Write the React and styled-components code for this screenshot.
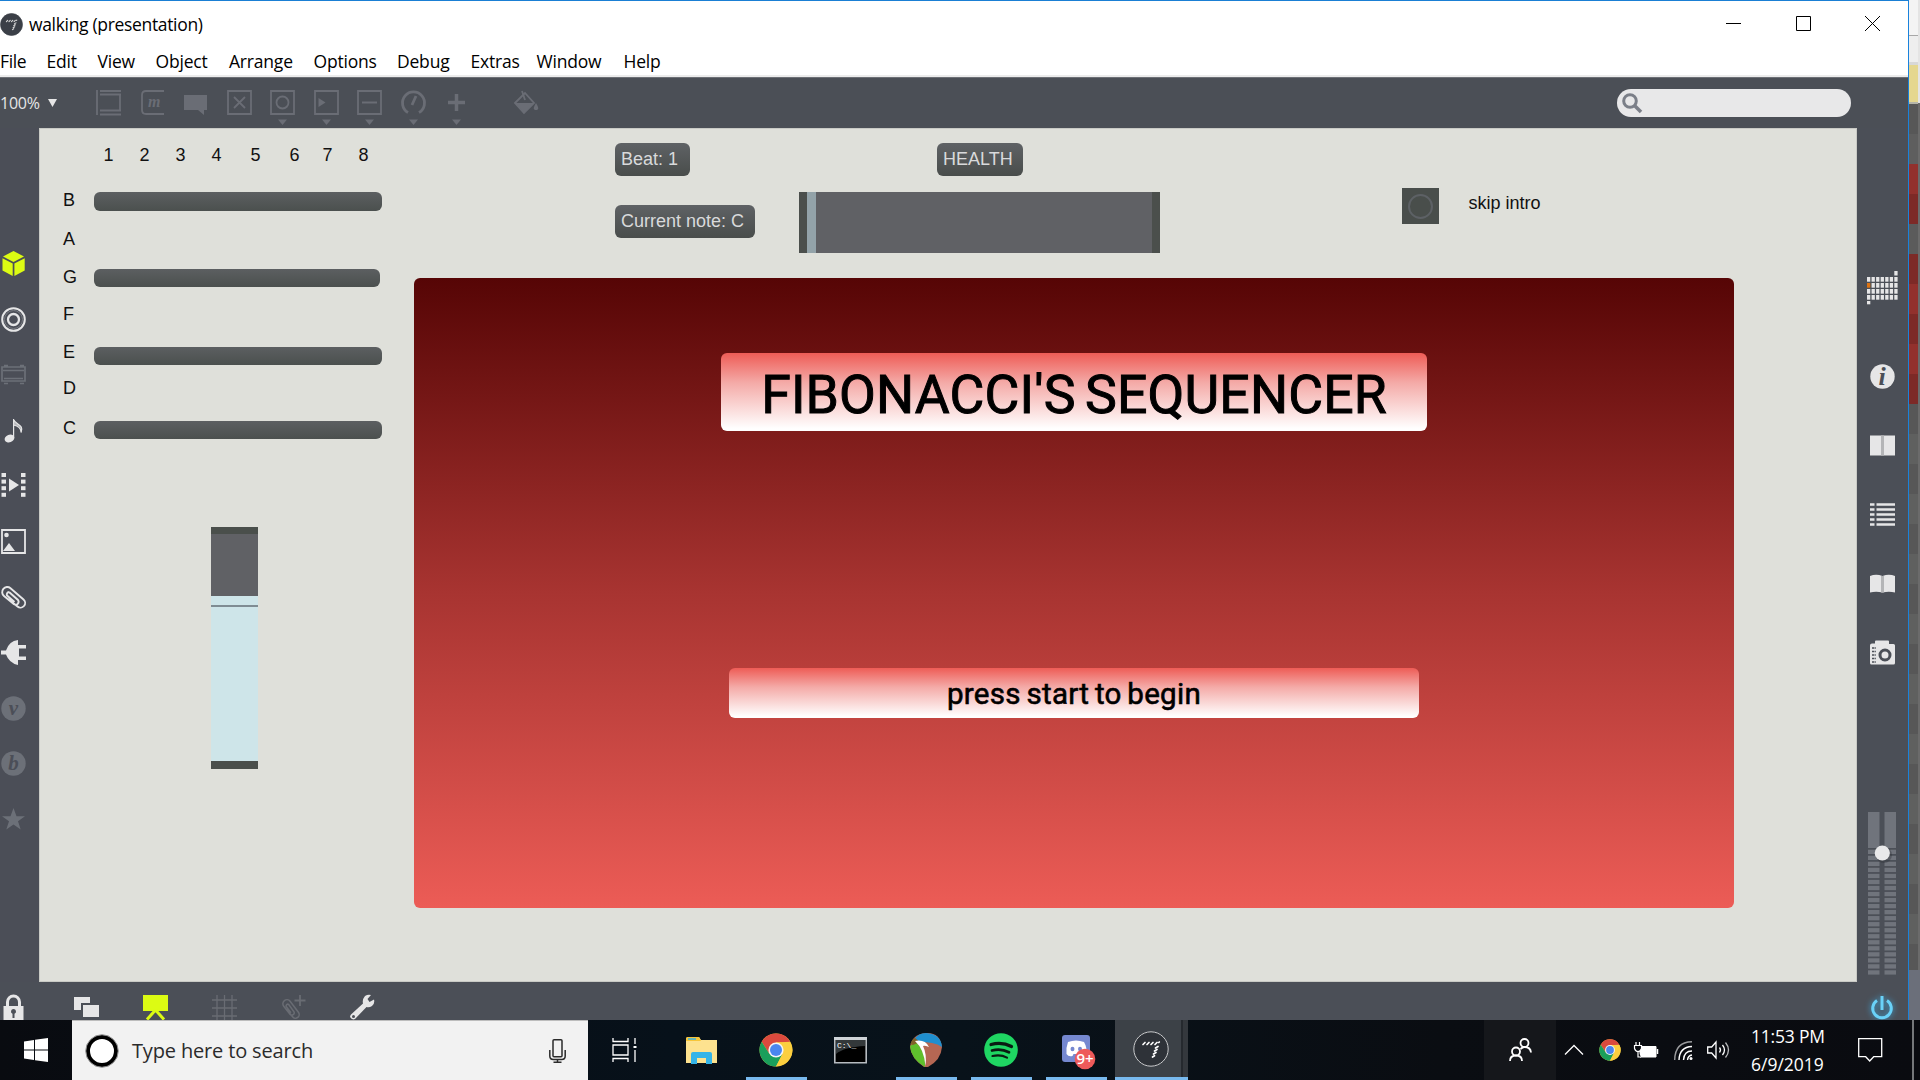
import React from "react";
import styled, { createGlobalStyle } from "styled-components";

const Global = createGlobalStyle`
  * { box-sizing: border-box; }
  body { margin: 0; background: #0a0e14; overflow: hidden; font-family: "Open Sans", "Noto Sans", sans-serif; }
  svg { display: block; flex: none; overflow: visible; }
`;

const Screen = styled.div`
  width: 1920px; height: 1080px; overflow: hidden;
  display: flex; flex-direction: column;
`;
const Desktop = styled.div`height: 1020px; display: flex; overflow: hidden; flex: none;`;
const Win = styled.div`
  width: 1909px; height: 1020px; display: flex; flex-direction: column;
  border-top: 1px solid #1a7fd4; border-right: 1px solid #1a82dc;
  background: #4b4f57; flex: none;
`;
const Label = styled.span`
  white-space: pre; display: block; flex: none;
  font-size: ${(p) => p.$size}px; line-height: ${(p) => p.$lh || 24}px;
  letter-spacing: ${(p) => p.$ls || 0}px;
  color: ${(p) => p.$color || "#000"};
`;
const TitleBar = styled.header`
  height: 46px; display: flex; align-items: center; background: #fff;
`;
const TitleText = styled(Label)`padding-left: 6px; width: 1703px; margin-bottom: 1px;`;
const WinControls = styled.div`
  display: flex; width: 154px; justify-content: space-between; padding-bottom: 1px; flex: none;
`;
const MenuBar = styled.nav`
  height: 30px; background: #fff; display: flex; align-items: center; border-bottom: 2px solid #ececec;
`;
const MenuItem = styled(Label)`width: ${(p) => p.$w}px;`;
const Toolbar = styled.div`
  height: 51px; display: flex; align-items: flex-start; border-top: 1px solid #6d7076;
  background: #4b4f56; color: #72757d;
`;
const Zoom = styled.div`
  width: 87px; height: 50px; display: flex; align-items: center; gap: 8px;
`;
const ToolCell = styled.div`
  width: ${(p) => p.$w || 43.5}px; padding-top: 12px; display: flex; justify-content: center; flex: none;
`;
const SearchField = styled.div`
  margin: 11px 0 0 1043px; width: 234px; height: 28px; border-radius: 14px; background: #e8e8e9;
  display: flex; align-items: center; padding-left: 5px; color: #7b7f88;
`;
const Body = styled.div`height: 854px; display: flex;`;
const Rail = styled.aside`
  width: 39px; padding-top: 108px; display: flex; flex-direction: column; background: #4b4e57;
`;
const RailCell = styled.div`
  height: ${(p) => p.$h}px; width: 27px; display: flex; align-items: center; justify-content: center;
`;
const SideRail = styled.aside`
  width: 51px; padding-top: 143px; display: flex; flex-direction: column; align-items: center;
`;
const SideTools = styled.div`
  margin: 37px 0 125px; display: flex; flex-direction: column;
`;
const SideCell = styled.div`
  height: 69px; width: 51px; display: flex; align-items: center; justify-content: center;
`;
const BottomBar = styled.div`
  height: 37px; display: flex; align-items: flex-start; padding-top: 13px;
`;
const BottomCell = styled.div`
  width: ${(p) => p.$w}px; flex: none; display: flex; justify-content: flex-start;
`;
const Power = styled.div`
  margin-left: auto; padding-right: 15px; filter: drop-shadow(0 0 3px #3da9dd);
`;

/* Free patcher canvas */
const Canvas = styled.main`
  position: relative; width: 1818px; height: 854px; background: #dfe0da; flex: none;
  box-shadow: inset 0 0 0 1px #c9cac5;
  font-family: "Liberation Sans", Arial, sans-serif;
`;
const Placed = styled.div`
  position: absolute; left: ${(p) => p.$x - 39}px; top: ${(p) => p.$y - 128}px;
  width: ${(p) => (p.$w ? p.$w + "px" : "auto")}; height: ${(p) => (p.$h ? p.$h + "px" : "auto")};
`;
const Comment = styled(Placed)`
  font-size: 18px; line-height: 20px; white-space: pre; color: #111;
`;
const Bar = styled(Placed)`border-radius: 6px; background: linear-gradient(#5c5f61, #4b504e);`;
const Message = styled(Placed)`
  border-radius: 6px; background: linear-gradient(#5f6265, #494d4b);
  color: #d9dadb; font-size: 18px; line-height: 33px; padding-left: 6px; white-space: pre;
`;
const HSlider = styled(Placed)`
  display: flex; background: #606165; border: solid #4b4f4c; border-width: 0 8px;
`;
const HKnob = styled.div`width: 9px; background: #93a3a9;`;
const VSlider = styled(Placed)`
  display: flex; flex-direction: column; justify-content: flex-end;
  background: #606165; border: solid #4a4f4b; border-width: 7px 0 8px;
`;
const VFill = styled.div`height: 165px; background: #cee5e9; padding-top: 9px;`;
const VLine = styled.div`height: 2px; background: #7f8c93;`;
const Bang = styled(Placed)`
  background: #494e4b; display: flex; align-items: center; justify-content: center;
`;
const Ring = styled.div`width: 25px; height: 25px; border-radius: 50%; border: 2px solid #5d6165;`;
const Panel = styled(Placed)`
  border-radius: 6px; background: linear-gradient(#560505 0%, #a83431 50%, #ec5c56 100%);
  display: flex; flex-direction: column; align-items: center; padding-top: 75px; gap: 237px;
`;
const Banner = styled.div`
  width: ${(p) => p.$w}px; height: ${(p) => p.$h}px; border-radius: 6px;
  background: linear-gradient(#ee5c56, #f4aaa7 38%, #fff 97%);
  display: flex; align-items: center; justify-content: center; padding-top: ${(p) => p.$pt}px;
  font-family: Roboto, sans-serif; font-weight: ${(p) => p.$weight}; color: #000; white-space: pre;
  font-size: ${(p) => p.$size}px; letter-spacing: ${(p) => p.$ls}px; word-spacing: ${(p) => p.$ws}px; line-height: 1;
  -webkit-text-stroke: ${(p) => p.$stroke}px #000;
`;

/* Window behind */
const Behind = styled.div`width: 11px; display: flex;`;
const BehindStack = styled.div`width: 9px; display: flex; flex-direction: column;`;
const BehindBand = styled.div`height: ${(p) => p.$h}px; background: ${(p) => p.$c}; flex: none;`;
const BehindEdge = styled.div`
  width: 2px; background: linear-gradient(#e4e4e4 0 103px, #6b6b6b 103px 970px, #6b6f7a 970px);
`;

/* Taskbar */
const Taskbar = styled.footer`
  height: 60px; display: flex; background: linear-gradient(90deg, #090b10, #07111a 35%, #08121a 50%, #0a0d12 75%, #0a0b10);
  flex: none;
`;
const Start = styled.div`width: 72px; display: flex; align-items: center; justify-content: center;`;
const SearchBox = styled.div`
  width: 516px; background: #f2f2f2; border-top: 1px solid #bdbdbd; display: flex; align-items: center; padding-left: 13px;
`;
const SearchPrompt = styled(Label)`width: 430px; padding-left: 13px; margin-top: 1px;`;
const TaskCell = styled.div`
  width: ${(p) => p.$w}px; flex: none; display: flex; justify-content: center; align-items: center;
  padding-left: ${(p) => p.$pl || 0}px;
`;
const Running = styled(TaskCell)`
  background: linear-gradient(#78b9ee, #78b9ee) ${(p) => p.$bx || 7}px bottom / 61px 3px no-repeat;
`;
const Active = styled.div`
  width: 73px; flex: none; display: flex; align-items: center; padding-left: 18px;
  border-bottom: 3px solid #78b9ee;
  background: linear-gradient(90deg, #3c4147 0 66px, #25292e 66px 68px, #34383d 68px);
`;
const People = styled.div`
  margin-left: 296px; width: 72px; background: #15171b; display: flex; align-items: center; justify-content: center;
`;
const Tray = styled.div`display: flex; align-items: center; padding-left: 9px; flex: none;`;
const TrayIcon = styled.div`width: ${(p) => p.$w}px; flex: none;`;
const Clock = styled.div`width: 107px; display: flex; flex-direction: column; flex: none; padding-bottom: 1px;`;
const ShowDesktop = styled.div`margin-left: 29px; width: 2px; height: 60px; background: #75777a;`;

const MaxSwirl = ({ size, bg, ring, c }) => (
  <svg width={size} height={size} viewBox="0 0 36 36">
    <circle cx="18" cy="18" r="17.2" fill={bg} stroke={ring} strokeWidth="1" />
    <g stroke={c} strokeWidth="1.7" strokeLinecap="round" fill="none">
      <path d="M10 13.500l2-2M14 13.500l2-2M18 13.500l2-2M22 13.500l2-2M25.800 11.500l.5-.5M22.500 17l2.500-1.500M21.500 20l2.500-1.500M20.500 23l2.500-1.500M19.500 26l2-1.300" />
    </g>
  </svg>
);

const Chrome = ({ size }) => (
  <svg width={size} height={size} viewBox="0 0 34 34">
    <circle cx="17" cy="17" r="16.500" fill="#fccf3f" />
    <path d="M2.700 8.750A16.500 16.500 0 0 1 31.300 8.750L17 9.500 10.500 21z" fill="#db4a3e" />
    <path d="M2.700 8.750A16.500 16.500 0 0 0 17 33.500L23.500 21H10.500z" fill="#1a9f5b" />
    <path d="M17 9.400H31.600A16.500 16.500 0 0 1 17 33.500L23.600 20.800z" fill="#fccf3f" />
    <circle cx="17" cy="17" r="7.600" fill="#f4f4f4" />
    <circle cx="17" cy="17" r="6" fill="#4a86ee" />
  </svg>
);

const Tool = ({ children, drop }) => (
  <svg width="25" height="36" viewBox="0 0 25 36" fill="none" stroke="#6a6d75" strokeWidth="1.800">
    {children}
    {drop && <path d="M8 29.500h9l-4.500 5.500z" fill="#6a6d75" stroke="none" />}
  </svg>
);
const tools = [
  <Tool><path d="M1 0v25M4 1h21M4 4.500h21M4 20.500h21M4 24.500h21M24 4v16" /></Tool>,
  <Tool><path d="M24 1H6Q2 1 2 5v15q0 4 4 4h18" /><text x="8" y="17" fontFamily="Liberation Serif, serif" fontStyle="italic" fontWeight="bold" fontSize="16" fill="#6a6d75" stroke="none">m</text></Tool>,
  <Tool><path d="M1 5h23v15h-3v5l-6-5H1z" fill="#6a6d75" stroke="none" /></Tool>,
  <Tool><path d="M1 1h23v23H1zM7 7l11 11M18 7L7 18" /></Tool>,
  <Tool drop><path d="M1 1h23v23H1z" /><circle cx="12.500" cy="12.500" r="6" /></Tool>,
  <Tool drop><path d="M1 1h23v23H1z" /><path d="M4.500 8l7 4.500-7 4.500z" fill="#6a6d75" stroke="none" /></Tool>,
  <Tool drop><path d="M1 1h23v23H1zM5 12.500h15" /></Tool>,
  <Tool drop><path d="M7 22.500A11 11 0 1 1 18 22.500M11 15l4-9" strokeWidth="2.800" /></Tool>,
  <Tool drop><path d="M12.500 4v17M4 12.500h17" strokeWidth="3.500" /></Tool>,
];

const W = "#e6e6e7";
const D = "#6c7078";
const BG = "#4b4f57";
const Clip = ({ c = W }) => (
  <path d="M8 8.500l9 8a3 3 0 0 1-4 4.300L3 12.500A5 5 0 0 1 9.500 4.700L22.500 16a4.500 4.500 0 0 1-6 7L7 15.500M8 8.500a2.500 2.500 0 0 0-2 3.500l7.500 6.500" fill="none" stroke={c} strokeWidth="1.900" transform="translate(0 -1.500)" />
);
const Ic = ({ children }) => <svg width="25" height="25" viewBox="0 0 25 25">{children}</svg>;
const Disc = ({ ch }) => (
  <Ic>
    <circle cx="12.500" cy="12.500" r="12.200" fill={D} />
    <text x="12.500" y="19" textAnchor="middle" fontFamily="Liberation Serif, serif" fontStyle="italic" fontWeight="bold" fontSize="21" fill="#4b4e57">{ch}</text>
  </Ic>
);
const railIcons = [
  <Ic><g fill="#dcfb13"><path d="M12.500 0L23 5.500 12.500 11 2 5.500z" /><path d="M1.500 7.300l10.200 5.200V25L1.500 19.500zM23.700 7.300l-10.300 5.200V25l10.300-5.500z" /></g></Ic>,
  <Ic><g fill="none" stroke={W} strokeWidth="2"><circle cx="12.500" cy="12.500" r="11.300" /><circle cx="12.500" cy="12.500" r="5.500" strokeWidth="2.300" /><circle cx="12.500" cy="12.500" r="9" stroke="#777a81" strokeWidth="1" /></g></Ic>,
  <Ic><g fill="none" stroke={D} strokeWidth="1.700"><path d="M1 5h23v14H1zM2 8.500h21M3 16.500h19M3 3.500h4M19 3.500h4M3 21.500h4M19 21.500h4" /></g></Ic>,
  <Ic><ellipse cx="8.500" cy="20.500" rx="5" ry="3.800" fill={W} transform="rotate(-20 8.500 20.500)" /><path d="M12.600 20V1M12.600 1c1 6 11 5 7.500 13.500 0-5-3-6.500-7.500-7.500" fill={W} stroke={W} strokeWidth="1.200" fillOpacity=".7" /></Ic>,
  <Ic><g fill={W}>{[0, 6.6, 13.2, 19.8].map((y) => <React.Fragment key={y}><rect x="0.500" y={y} width="4.500" height="4" /><rect x="20" y={y} width="4.500" height="4" /></React.Fragment>)}<path d="M8 5.500l10 6.500-10 6.500z" /></g></Ic>,
  <Ic><path d="M1 1h23v23H1z" fill="none" stroke={W} strokeWidth="1.800" /><circle cx="5.500" cy="6" r="2.300" fill={W} /><path d="M2 22l6-8 6 8z" fill={W} /></Ic>,
  <Ic><Clip /></Ic>,
  <Ic><path d="M0 10.500h5Q8 1 17 0v5h8v3.500h-7v8h7V20h-8v5Q8 23 5 14.500H0z" fill={W} /></Ic>,
  <Disc ch="v" />,
  <Disc ch="b" />,
  <Ic><path d="M12.500 1l3 8.200H24l-7 5 2.700 8.300-7.200-5-7.200 5L8 14.200 1 9.200h8.500z" fill={D} /></Ic>,
];

const sideIcons = [
  <Ic><circle cx="12.500" cy="12.500" r="12.200" fill={W} /><text x="12" y="21" textAnchor="middle" fontFamily="Liberation Serif, serif" fontStyle="italic" fontWeight="bold" fontSize="26" fill={BG}>i</text></Ic>,
  <Ic><path d="M0 2.500h25v20H0z" fill={W} /><path d="M11 2.500h3v20h-3z" fill="#b4b5b7" /></Ic>,
  <Ic><path d="M0 2.500h4.500M6.500 2.500H25M0 7.500h4.500M6.500 7.500H25M0 12.500h4.500M6.500 12.500H25M0 17.500h4.500M6.500 17.500H25M0 22.500h4.500M6.500 22.500H25" stroke={W} strokeWidth="2.600" /></Ic>,
  <Ic><path d="M0 5q6-2.500 12.500 0Q19 2.500 25 5v16.500q-6-1.500-12.500 0-6.500-1.500-12.500 0z" fill={W} /><path d="M11 5h3v16.500h-3z" fill="#b4b5b7" /></Ic>,
  <Ic><path d="M5 3V1.500Q5 .5 6 .5h12q1 0 1 1V4h4.500Q25 4 25 5.500V23q0 1.500-1.500 1.500h-22Q0 24.500 0 23V5.500Q0 3.500 2 3.500h3z" fill={W} /><circle cx="15" cy="15" r="5" fill="none" stroke={BG} strokeWidth="3" /><path d="M2 8h4M2 11.500h4M2 15h4M2 18.500h4M2 22h4" stroke={BG} strokeWidth="1.600" strokeDasharray="2.500 .7" /></Ic>,
];

const DotGrid = () => (
  <svg width="31" height="34" viewBox="0 0 31 34" fill={W}>
    {[0, 1, 2, 3].map((r) => [0, 1, 2, 3, 4, 5, 6].map((c) => (
      <rect key={`${r}-${c}`} x={c * 4.55} y={6 + r * 6} width="3.300" height="4.700" fill={r === 1 && c === 0 ? "#dd7312" : W} />
    )))}
    <rect x="27.300" y="0" width="3.300" height="4.500" /><rect x="0" y="30" width="3.300" height="3.300" />
  </svg>
);

const Meter = () => (
  <svg width="29" height="164" viewBox="0 0 29 164" fill="#70747c">
    {[0, 16.5].map((x) => (
      <g key={x}>
        <rect x={x} y="0" width="11.500" height="36" />
        {Array.from({ length: 21 }, (_, i) => <rect key={i} x={x} y={37.7 + i * 6.03} width="11.500" height="4.300" />)}
      </g>
    ))}
    <circle cx="16" cy="43" r="8" fill="#2b2e33" opacity=".35" />
    <circle cx="14.300" cy="41" r="7.600" fill="#e9e9ea" />
  </svg>
);

const bands = [
  [35, "#f4f4f4"], [1, "#a8a8a8"], [26, "#eeeeee"], [3, "#d8d8d8"], [37, "#e5d78f"], [2, "#b5b5a8"], [30, "#575757"], [30, "#5e5e5e"],
  [30, "#92312d"], [30, "#7d2a27"], [30, "#5b5b5b"], [30, "#7d2a27"], [30, "#92312d"], [30, "#7d2a27"], [30, "#92312d"], [30, "#7d2a27"],
  ...Array.from({ length: 19 }, (_, i) => [i === 18 ? 26 : 30, i % 2 ? "#5f605f" : "#575757"]),
  [60, "#6b6f7a"],
];

const menu = [["File", 46.5], ["Edit", 51], ["View", 58], ["Object", 73.5], ["Arrange", 84.5], ["Options", 83.5], ["Debug", 73.5], ["Extras", 66], ["Window", 87], ["Help", 60]];
const digits = [103.5, 139.5, 175.5, 211.5, 250.5, 289.5, 322.5, 358.5];
const notes = [["B", 190], ["A", 229], ["G", 267], ["F", 304], ["E", 342], ["D", 378], ["C", 418]];

export default function App() {
  return (
    <>
      <Global />
      <Screen>
        <Desktop>
          <Win>
            <TitleBar>
              <MaxSwirl size={23} bg="#3b3f47" ring="#3b3f47" c="#d8d8d8" />
              <TitleText $size={17.5} $ls={-0.33}>walking (presentation)</TitleText>
              <WinControls>
                <svg width="15" height="15"><path d="M0 7.500h15" stroke="#000" /></svg>
                <svg width="15" height="15"><path d="M.5.5h14v14H.5z" fill="none" stroke="#000" /></svg>
                <svg width="15" height="15"><path d="M0 0l15 15M15 0L0 15" stroke="#000" /></svg>
              </WinControls>
            </TitleBar>
            <MenuBar>
              {menu.map(([t, w], i) => <MenuItem key={t} $w={w} $size={17.5} $ls={i ? -0.2 : -0.4}>{t}</MenuItem>)}
            </MenuBar>
            <Toolbar>
              <Zoom>
                <Label $size={16} $color="#e6e6e6" $ls={-0.25}>100%</Label>
                <svg width="9" height="9"><path d="M0 0h9L4.500 8z" fill="#e6e6e6" /></svg>
              </Zoom>
              {tools.map((t, i) => <ToolCell key={i}>{t}</ToolCell>)}
              <ToolCell $w={95}>
                <svg width="25" height="25" viewBox="0 0 25 25"><path d="M1 13L11 3l9 10-10 10z" fill="none" stroke="#6a6d75" strokeWidth="1.800" /><path d="M1 13h19L10 23zM22 13c3 5 3 7 0 7s-3-2 0-7z" fill="#6a6d75" /><path d="M8 1l3 9" stroke="#6a6d75" strokeWidth="1.800" /></svg>
              </ToolCell>
              <SearchField>
                <svg width="21" height="21" fill="none" stroke="#7b7f88" strokeWidth="3"><circle cx="8" cy="8" r="6.300" /><path d="M12.500 12.500l6.500 6.500" strokeWidth="3.500" /></svg>
              </SearchField>
            </Toolbar>
            <Body>
              <Rail>
                {railIcons.map((n, i) => <RailCell key={i} $h={55.56}>{n}</RailCell>)}
              </Rail>
              <Canvas>
                {digits.map((x, i) => <Comment key={x} $x={x} $y={145}>{i + 1}</Comment>)}
                {notes.map(([n, y]) => <Comment key={n} $x={63} $y={y}>{n}</Comment>)}
                <Bar $x={94} $y={192} $w={288} $h={18.5} />
                <Bar $x={94} $y={269} $w={286} $h={18} />
                <Bar $x={94} $y={347} $w={288} $h={17.5} />
                <Bar $x={94} $y={420.5} $w={288} $h={18} />
                <VSlider $x={211} $y={527} $w={47} $h={242}><VFill><VLine /></VFill></VSlider>
                <Message $x={615} $y={143} $w={75} $h={33}>Beat: 1</Message>
                <Message $x={615} $y={204.5} $w={140} $h={33}>Current note: C</Message>
                <Message $x={937} $y={143} $w={86} $h={33}>HEALTH</Message>
                <HSlider $x={799} $y={192} $w={361} $h={61}><HKnob /></HSlider>
                <Bang $x={1402} $y={188} $w={37} $h={36}><Ring /></Bang>
                <Comment $x={1468.5} $y={193}>skip intro</Comment>
                <Panel $x={414} $y={278} $w={1320} $h={630}>
                  <Banner $w={706} $h={78} $size={53.5} $ls={0.15} $ws={-4} $pt={6} $weight={400} $stroke={1}>FIBONACCI'S SEQUENCER</Banner>
                  <Banner $w={690} $h={50} $size={29.5} $ls={0.3} $ws={-2} $pt={4} $weight={400} $stroke={0.6}>press start to begin</Banner>
                </Panel>
              </Canvas>
              <SideRail>
                <DotGrid />
                <SideTools>
                  {sideIcons.map((n, i) => <SideCell key={i}>{n}</SideCell>)}
                </SideTools>
                <Meter />
              </SideRail>
            </Body>
            <BottomBar>
              <BottomCell $w={74}><svg width="27" height="25" viewBox="0 0 27 25"><path d="M7.500 12V7a6 6 0 0 1 12 0v5" fill="none" stroke={W} strokeWidth="3" /><path d="M3.500 11h20v14h-20z" fill={W} /><path d="M13.500 14a2.500 2.500 0 0 1 1 4.800V23h-2v-4.200a2.500 2.500 0 0 1 1-4.800z" fill={BG} /></svg></BottomCell>
              <BottomCell $w={69}><svg width="26" height="25"><path d="M0 2h16v6H7v7H0z" fill={W} /><path d="M9 10h16v12H9z" fill={W} /></svg></BottomCell>
              <BottomCell $w={69}><svg width="25" height="25"><path d="M0 0h25v16H0z" fill="#dcfb13" /><path d="M12.500 15L4 24.500M12.500 15l8.500 9.500" stroke="#dcfb13" strokeWidth="3" /></svg></BottomCell>
              <BottomCell $w={69}><svg width="25" height="25"><path d="M5 0v25M12.500 0v25M20 0v25M0 5h25M0 13h25M0 21h25" stroke="#696c73" strokeWidth="1.300" /></svg></BottomCell>
              <BottomCell $w={69}><svg width="25" height="25"><g transform="translate(0 4) scale(.8) rotate(12 12 12)"><Clip c="#696c73" /></g><path d="M19 0v11M13.500 5.500h11" stroke="#696c73" strokeWidth="1.800" /></svg></BottomCell>
              <BottomCell $w={30}><svg width="24" height="25"><path d="M15 1q3-2 6-1l-3.500 4 2 3L24 4.500q1 4-2 6.500-3 2-5.500 1L5 24q-3 1.500-5-2 0-1.500 1-2.500L13 8.500q-1-4 2-7.500z" fill={W} /><circle cx="3.500" cy="21.500" r="1.500" fill={BG} /></svg></BottomCell>
              <Power><svg width="22" height="25" fill="none" stroke="#6ad2f8" strokeWidth="3"><path d="M6 5.500a9.300 9.300 0 1 0 10 0M11 1v14" /></svg></Power>
            </BottomBar>
          </Win>
          <Behind>
            <BehindStack>{bands.map(([h, c], i) => <BehindBand key={i} $h={h} $c={c} />)}</BehindStack>
            <BehindEdge />
          </Behind>
        </Desktop>
        <Taskbar>
          <Start><svg width="24" height="24" fill="#fff"><path d="M0 3.500L10 2v9.500H0zM11 1.800L24 0v11.500H11zM0 12.500h10V22L0 20.500zM11 12.500h13V24l-13-1.800z" /></svg></Start>
          <SearchBox>
            <svg width="34" height="34"><circle cx="17" cy="17" r="14" fill="#fff" stroke="#000" strokeWidth="4" /><circle cx="17" cy="17" r="16.300" fill="none" stroke="#8b8b8b" strokeWidth="1" /></svg>
            <SearchPrompt $size={20} $ls={-0.16} $color="#2b2b2b">Type here to search</SearchPrompt>
            <svg width="17" height="24" fill="none" stroke="#2b2b2b" strokeWidth="1.500"><rect x="4" y=".8" width="9" height="17" rx="1" /><path d="M.8 11v6q0 3.500 3.500 3.500h8.400q3.500 0 3.500-3.500v-6M8.500 20v3M4.500 23.200h8" /></svg>
          </SearchBox>
          <TaskCell $w={73}><svg width="26" height="24" fill="none" stroke="#fff" strokeWidth="1.300"><path d="M1 0v3.500h15V0M1 7h15v10H1zM1 24v-3.500h15V24M23 0v6M23 12v12" /><path d="M21.500 8h3v2h-3z" fill="#fff" stroke="none" /></svg></TaskCell>
          <TaskCell $w={77} $pl={3}><svg width="33" height="27"><path d="M1 2q0-2 2-2h11l2 3h16v23H1z" fill="#fde28f" /><path d="M1 2q0-2 2-2h11l2 4H1z" fill="#f7c63a" /><path d="M3 2h8" stroke="#39b0e5" strokeWidth="1.500" /><path d="M6 27V17q0-2 2-2h17q2 0 2 2v10h-6v-6h-9v6z" fill="#35b4e8" /></svg></TaskCell>
          <Running $w={75} $pl={1} $bx={8}><Chrome size={34} /></Running>
          <TaskCell $w={74} $pl={2}><svg width="34" height="27"><path d="M.8.800h31.400v25H.8z" fill="#000" stroke="#b6bbc0" strokeWidth="1.600" /><path d="M0 0h33v3H0z" fill="#cfd4d8" /><path d="M2 3h29v6Q10 10 2 17z" fill="#33383a" /><text x="3" y="11" fontFamily="Liberation Mono, monospace" fontSize="8" fill="#fff">C:\_</text></svg></TaskCell>
          <Running $w={77} $pl={1} $bx={9}><svg width="34" height="34"><path d="M1 14Q3 1 17 0t16 14q-1 13-14 20h-4Q2 25 1 14z" fill="#b56753" /><path d="M5 7Q9 0 17 0q15 1 16 14-4-3-10-4L8 8z" fill="#1f8fcf" /><path d="M1 13l6-4q10 10 9 25Q2 26 1 13z" fill="#5fbf2d" /><path d="M1.500 11Q3 6 6 5l5 4-7 3z" fill="#806229" /><path d="M6 8q10-2 14 6-5-2-6-1 4 8 2.500 20Q15 16 6 8z" fill="#fff" /></svg></Running>
          <Running $w={73} $pl={1} $bx={7}><svg width="34" height="34"><circle cx="17" cy="17" r="16.800" fill="#1fd662" /><g fill="none" stroke="#0a1b12" strokeLinecap="round"><path d="M7 11.500q11-3 20.500 2" strokeWidth="3.200" /><path d="M8 17.500q9-2.500 17 1.800" strokeWidth="2.700" /><path d="M8.500 23q8-2 14.500 1.600" strokeWidth="2.200" /></g></svg></Running>
          <Running $w={78} $pl={4} $bx={9}><svg width="34" height="36" viewBox="0 0 34 36"><rect x="1" y="3" width="28" height="27" rx="3" fill="#7588d0" /><path d="M7 10q8-3 16 0 3 5 2.500 12-3 3-6 2l-1-2h-6l-1 2q-4 1-6-2-.5-7 1.500-12z" fill="#fff" /><ellipse cx="11.500" cy="17" rx="2" ry="2.300" fill="#7588d0" /><ellipse cx="19" cy="17" rx="2" ry="2.300" fill="#7588d0" /><circle cx="24" cy="27" r="10.300" fill="#ee5a5a" /><text x="24" y="32" textAnchor="middle" fontFamily="Open Sans, sans-serif" fontSize="15" fontWeight="600" fill="#fff">9+</text></svg></Running>
          <Active><MaxSwirl size={36} bg="#2e3238" ring="#c9cacc" c="#fff" /></Active>
          <People><svg width="23" height="24" fill="none" stroke="#fff" strokeWidth="1.800"><circle cx="15.500" cy="5" r="4" /><circle cx="7" cy="13.500" r="4" /><path d="M1 23q0-5.500 6-5.500t6 5.500M11.500 11q2-2 4-2 6 0 6.500 5.500" /></svg></People>
          <Tray>
            <TrayIcon $w={34}><svg width="18" height="10"><path d="M0 9.500l9-9 9 9" fill="none" stroke="#fff" strokeWidth="1.300" /></svg></TrayIcon>
            <TrayIcon $w={35}><Chrome size={22} /></TrayIcon>
            <TrayIcon $w={40}><svg width="25" height="17"><path d="M6 4.500h16v10.500H6z" fill="#fff" stroke="#fff" /><path d="M23.500 7v5" stroke="#fff" strokeWidth="1.500" /><path d="M2 0v3M5.500 0v3M.5 3.500h7v3q-1 3-3.500 3t-3.500-3zM4 9v6h3" fill="#0b0d12" stroke="#fff" strokeWidth="1.200" /></svg></TrayIcon>
            <TrayIcon $w={33}><svg width="19" height="19" fill="none" strokeWidth="1.400"><path d="M.7 19Q1 1 18 .8" stroke="#9a9b9d" /><path d="M5 19Q5.500 6 18 5.500M9.500 19q.5-9 8.500-9M13.500 19q.5-4.500 4.500-5" stroke="#fff" /><circle cx="17" cy="17.500" r="1.500" fill="#fff" /></svg></TrayIcon>
            <TrayIcon $w={44}><svg width="23" height="18" fill="none" stroke="#fff" strokeWidth="1.300"><path d="M.7 6h4L9 1v16l-4.300-5h-4zM12.500 6.500q2 2.500 0 5M15.500 4q4 5 0 10" /><path d="M18.500 1.500q6 7.500 0 15" stroke="#b5b6b8" /></svg></TrayIcon>
            <Clock><Label $size={17.5} $lh={28} $ls={-0.2} $color="#fff">11:53 PM</Label><Label $size={17.5} $lh={28} $ls={0} $color="#fff">6/9/2019</Label></Clock>
            <svg width="25" height="24"><path d="M.7.700h23v18h-8l-4 4.300-4-4.300h-7z" fill="none" stroke="#fff" strokeWidth="1.300" /></svg>
            <ShowDesktop />
          </Tray>
        </Taskbar>
      </Screen>
    </>
  );
}
